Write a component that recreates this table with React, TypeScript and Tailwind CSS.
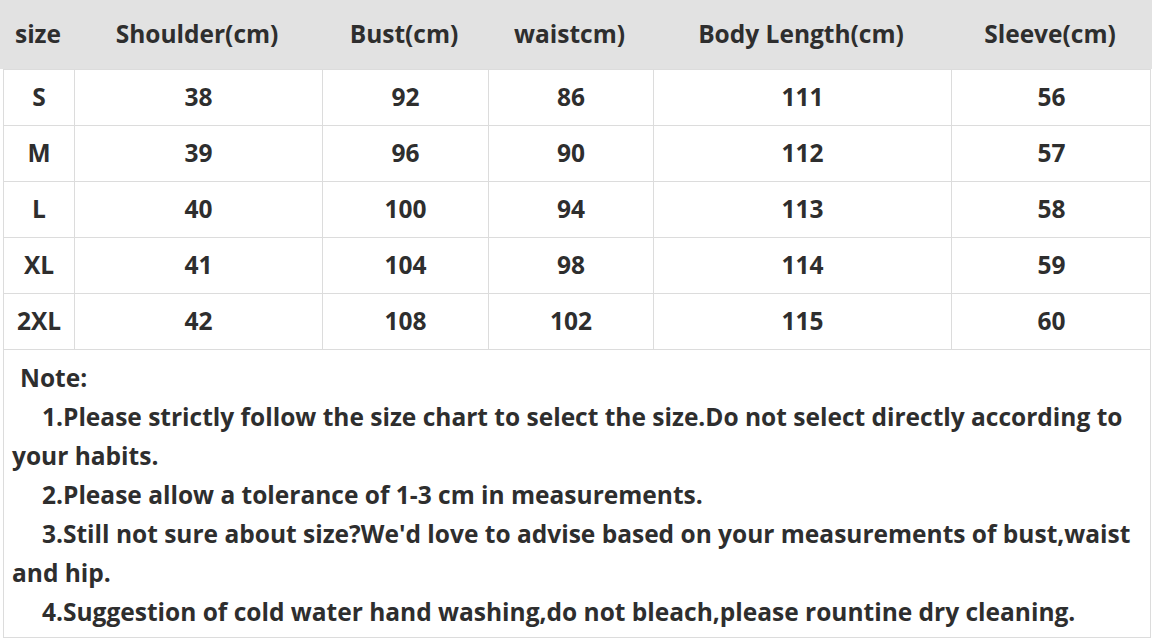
import React from 'react';

const cols = 'grid grid-cols-[70px_248px_166px_165px_298px_200px]';

const headers = ['size', 'Shoulder(cm)', 'Bust(cm)', 'waistcm)', 'Body Length(cm)', 'Sleeve(cm)'];

const rows = [
  ['S', '38', '92', '86', '111', '56'],
  ['M', '39', '96', '90', '112', '57'],
  ['L', '40', '100', '94', '113', '58'],
  ['XL', '41', '104', '98', '114', '59'],
  ['2XL', '42', '108', '102', '115', '60'],
];

const notes: { text: string; indent: string }[] = [
  { text: 'Note:', indent: 'pl-[8px]' },
  { text: '1.Please strictly follow the size chart to select the size.Do not select directly according to', indent: 'pl-[30px]' },
  { text: 'your habits.', indent: '' },
  { text: '2.Please allow a tolerance of 1-3 cm in measurements.', indent: 'pl-[30px]' },
  { text: "3.Still not sure about size?We'd love to advise based on your measurements of bust,waist", indent: 'pl-[30px]' },
  { text: 'and hip.', indent: '' },
  { text: '4.Suggestion of cold water hand washing,do not bleach,please rountine dry cleaning.', indent: 'pl-[30px]' },
];

export default function App() {
  return (
    <div className="w-[1152px] h-[639px] bg-white text-[#2e2e2e] font-['Open_Sans',sans-serif] font-bold overflow-hidden">
      {/* Header */}
      <div className={`${cols} h-[69px] bg-[#e2e2e2] pl-[3px] text-[24.5px]`}>
        {headers.map((h) => (
          <div key={h} className="flex items-center justify-center">{h}</div>
        ))}
      </div>

      {/* Body */}
      <div className="ml-[3px] w-[1148px] border-x border-b border-[#dcdcdc]">
        {rows.map((r) => (
          <div key={r[0]} className={`${cols} h-[56px] border-t border-[#dcdcdc] text-[24.5px]`}>
            {r.map((c, i) => (
              <div
                key={i}
                className={`flex items-center justify-center ${i > 0 ? 'border-l border-[#dcdcdc]' : ''}`}
              >
                {c}
              </div>
            ))}
          </div>
        ))}

        {/* Notes */}
        <div className="h-[288px] border-t border-[#dcdcdc] pl-[8px] pt-[8px] text-[24.5px] leading-[39px]">
          {notes.map((n, i) => (
            <div key={i} className={`whitespace-nowrap ${n.indent}`}>{n.text}</div>
          ))}
        </div>
      </div>
    </div>
  );
}
